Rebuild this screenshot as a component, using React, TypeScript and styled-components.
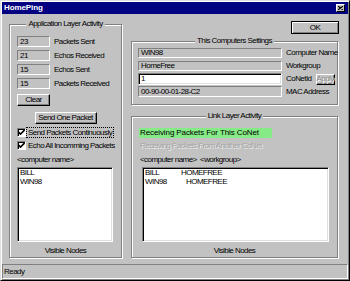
import React from 'react';
import styled, { createGlobalStyle } from 'styled-components';

const FONT = `"Liberation Sans", Arial, sans-serif`;
const FACE = '#c2c2c2';

const Global = createGlobalStyle`
  html, body { margin: 0; padding: 0; background: ${FACE}; }
`;

const Window = styled.div`
  box-sizing: border-box;
  width: 350px;
  height: 281px;
  padding: 1px;
  background: ${FACE};
  border: 1px solid;
  border-color: #dfdfdf #000 #000 #dfdfdf;
  box-shadow: inset 1px 1px 0 #fff, inset -1px -1px 0 #808080;
  display: flex;
  flex-direction: column;
  font-family: ${FONT};
  font-size: 8px;
  line-height: 10px;
  letter-spacing: -0.55px;
  white-space: nowrap;
  color: #000;
`;

const TitleBar = styled.div`
  flex: none;
  height: 12px;
  background: #000080;
  display: flex;
  align-items: center;
  justify-content: space-between;
  padding: 0 3px 0 2px;
`;

const Title = styled.span`
  color: #fff;
  font-weight: bold;
  font-size: 8px;
  letter-spacing: -0.1px;
`;

const CloseBox = styled.span`
  box-sizing: border-box;
  width: 9px;
  height: 8px;
  background: ${FACE};
  border: 1px solid;
  border-color: #fff #000 #000 #fff;
  display: flex;
  align-items: center;
  justify-content: center;
`;

const Body = styled.div`
  flex: 1;
  display: flex;
  gap: 9px;
  padding: 0 10px 5px 7px;
  min-height: 0;
`;

const RightCol = styled.div`
  width: 207px;
  display: flex;
  flex-direction: column;
`;

const GroupBox = styled.div<{ $mt: number; $w?: number; $h?: number }>`
  box-sizing: border-box;
  margin-top: ${(p) => p.$mt}px;
  ${(p) => (p.$w ? `width: ${p.$w}px;` : '')}
  ${(p) => (p.$h ? `height: ${p.$h}px; flex: none;` : 'flex: 1;')}
  border: 1px solid #808080;
  box-shadow: inset 1px 1px 0 #fff, 1px 1px 0 #fff;
  display: flex;
  flex-direction: column;
`;

const Legend = styled.div`
  align-self: center;
  margin-top: -6px;
  height: 10px;
  padding: 0 2px;
  background: ${FACE};
`;

const GroupContent = styled.div<{ $pl: number; $pr: number }>`
  flex: 1;
  display: flex;
  flex-direction: column;
  padding: 0 ${(p) => p.$pr}px 0 ${(p) => p.$pl}px;
`;

const CounterRow = styled.div<{ $mt: number }>`
  display: flex;
  align-items: center;
  gap: 4px;
  height: 11px;
  margin-top: ${(p) => p.$mt}px;
`;

const CounterBox = styled.div`
  box-sizing: border-box;
  width: 33px;
  height: 11px;
  padding-left: 2px;
  line-height: 9px;
  border: 1px solid;
  border-color: #808080 #fff #fff #808080;
`;

const Btn = styled.button<{ $w: number; $h: number; $mt?: number; $center?: boolean; $isDefault?: boolean }>`
  box-sizing: border-box;
  width: ${(p) => p.$w}px;
  height: ${(p) => p.$h}px;
  margin-top: ${(p) => p.$mt ?? 0}px;
  ${(p) => (p.$center ? 'align-self: center;' : '')}
  padding: 0;
  background: ${FACE};
  font: inherit;
  letter-spacing: inherit;
  white-space: nowrap;
  color: #000;
  border: 1px solid;
  border-color: ${(p) => (p.$isDefault ? '#000' : '#fff #000 #000 #fff')};
  box-shadow: ${(p) =>
    p.$isDefault
      ? 'inset 1px 1px 0 #fff, inset -1px -1px 0 #808080'
      : 'inset -1px -1px 0 #808080'};
  display: flex;
  align-items: center;
  justify-content: center;
  &:disabled {
    color: #8a8a8a;
    text-shadow: 1px 1px 0 #fff;
  }
`;

const OkRow = styled.div`
  display: flex;
  justify-content: flex-end;
  margin-top: 7px;
  margin-right: -1px;
`;

const CheckRow = styled.label<{ $mt: number }>`
  display: flex;
  align-items: center;
  gap: 1px;
  height: 10px;
  margin-top: ${(p) => p.$mt}px;
`;

const CheckBox = styled.span`
  box-sizing: border-box;
  flex: none;
  width: 9px;
  height: 9px;
  background: #fff;
  border: 1px solid;
  border-color: #808080 #fff #fff #808080;
  box-shadow: inset 1px 1px 0 #000;
  display: flex;
  align-items: center;
  justify-content: center;
`;

const CheckText = styled.span<{ $focused?: boolean }>`
  padding: 0 1px;
  line-height: 9px;
  outline: ${(p) => (p.$focused ? '1px dotted #000' : 'none')};
`;

const Caption = styled.div<{ $mt: number; $pl?: number; $center?: boolean }>`
  height: 10px;
  margin-top: ${(p) => p.$mt}px;
  padding-left: ${(p) => p.$pl ?? 0}px;
  white-space: pre;
  ${(p) => (p.$center ? 'text-align: center;' : '')}
`;

const ListBox = styled.div<{ $w: number; $ml?: number }>`
  box-sizing: border-box;
  width: ${(p) => p.$w}px;
  height: 75px;
  margin-top: 2px;
  margin-left: ${(p) => p.$ml ?? 0}px;
  padding: 0 0 0 1px;
  background: #fff;
  border: 1px solid;
  border-color: #808080 #fff #fff #808080;
  box-shadow: inset 1px 1px 0 #000, inset -1px -1px 0 #dfdfdf;
  line-height: 9px;
`;

const ListItem = styled.div`
  display: flex;
  height: 9px;
  padding-left: 1px;
`;

const ItemName = styled.span<{ $w?: number }>`
  ${(p) => (p.$w ? `width: ${p.$w}px; flex: none;` : '')}
`;

const SettingRow = styled.div<{ $mt: number; $h: number }>`
  display: flex;
  align-items: center;
  gap: 4px;
  height: ${(p) => p.$h}px;
  margin-top: ${(p) => p.$mt}px;
`;

const ReadField = styled.div<{ $white?: boolean }>`
  box-sizing: border-box;
  flex: none;
  width: 144px;
  height: 100%;
  padding-left: 2px;
  display: flex;
  align-items: center;
  background: ${(p) => (p.$white ? '#fff' : FACE)};
  border: 1px solid;
  border-color: #808080 #fff #fff #808080;
  ${(p) => (p.$white ? 'box-shadow: inset 1px 1px 0 #000, inset -1px -1px 0 #dfdfdf;' : '')}
`;

const FieldLabel = styled.span<{ $grow?: boolean }>`
  ${(p) => (p.$grow ? 'flex: 1;' : '')}
`;

const StatusLight = styled.div`
  align-self: flex-start;
  box-sizing: border-box;
  width: 133px;
  height: 10px;
  margin-top: 7px;
  padding-left: 1px;
  letter-spacing: -0.1px;
  background: #86ea86;
`;

const DisabledText = styled.div<{ $mt: number }>`
  height: 10px;
  margin-top: ${(p) => p.$mt}px;
  padding-left: 1px;
  color: #a4a4a4;
  text-shadow: 1px 1px 0 #ececec;
`;

const StatusBar = styled.div`
  flex: none;
  box-sizing: border-box;
  height: 15px;
  margin-top: 1px;
  padding-left: 1px;
  border: 1px solid;
  border-color: #808080 #fff #fff #808080;
  display: flex;
  align-items: center;
`;

const counters = [
  { value: '23', label: 'Packets Sent' },
  { value: '21', label: 'Echos Received' },
  { value: '15', label: 'Echos Sent' },
  { value: '15', label: 'Packets Received' },
];

const linkNodes = [
  { name: 'BILL', group: 'HOMEFREE', w: 36 },
  { name: 'WIN98', group: 'HOMEFREE', w: 41 },
];

const Check = () => (
  <svg width="7" height="7" viewBox="0 0 7 7">
    <path d="M0.5 3 L2.5 5 L6.5 1" fill="none" stroke="#000" strokeWidth="1.6" />
  </svg>
);

const CloseX = () => (
  <svg width="5" height="4" viewBox="0 0 5 4">
    <path d="M0 0 L5 4 M5 0 L0 4" stroke="#000" strokeWidth="1.1" />
  </svg>
);

export default function App() {
  return (
    <>
      <Global />
      <Window>
        <TitleBar>
          <Title>HomePing</Title>
          <CloseBox>
            <CloseX />
          </CloseBox>
        </TitleBar>
        <Body>
          <GroupBox $mt={10} $w={113}>
            <Legend>Application Layer Activity</Legend>
            <GroupContent $pl={7} $pr={7}>
              {counters.map((c, i) => (
                <CounterRow key={i} $mt={i === 0 ? 7 : 3}>
                  <CounterBox>{c.value}</CounterBox>
                  <span>{c.label}</span>
                </CounterRow>
              ))}
              <Btn $w={33} $h={12} $mt={5}>Clear</Btn>
              <Btn $w={62} $h={12} $mt={6} $center>Send One Packet</Btn>
              <CheckRow $mt={3}>
                <CheckBox><Check /></CheckBox>
                <CheckText $focused>Send Packets Continuously</CheckText>
              </CheckRow>
              <CheckRow $mt={3}>
                <CheckBox><Check /></CheckBox>
                <CheckText>Echo All Incomming Packets</CheckText>
              </CheckRow>
              <Caption $mt={5}>{'<computer name>'}</Caption>
              <ListBox $w={96}>
                <ListItem>BILL</ListItem>
                <ListItem>WIN98</ListItem>
              </ListBox>
              <Caption $mt={4} $center>Visible Nodes</Caption>
            </GroupContent>
          </GroupBox>
          <RightCol>
            <OkRow>
              <Btn $w={48} $h={13} $isDefault>OK</Btn>
            </OkRow>
            <GroupBox $mt={7} $h={64}>
              <Legend>This Computers Settings</Legend>
              <GroupContent $pl={6} $pr={3}>
                <SettingRow $mt={2} $h={10}>
                  <ReadField>WIN98</ReadField>
                  <FieldLabel>Computer Name</FieldLabel>
                </SettingRow>
                <SettingRow $mt={3} $h={10}>
                  <ReadField>HomeFree</ReadField>
                  <FieldLabel>Workgroup</FieldLabel>
                </SettingRow>
                <SettingRow $mt={2} $h={12}>
                  <ReadField $white>1</ReadField>
                  <FieldLabel $grow>CoNetId</FieldLabel>
                  <Btn $w={22} $h={11} disabled>Apply</Btn>
                </SettingRow>
                <SettingRow $mt={1} $h={11}>
                  <ReadField>00-90-00-01-28-C2</ReadField>
                  <FieldLabel>MAC Address</FieldLabel>
                </SettingRow>
              </GroupContent>
            </GroupBox>
            <GroupBox $mt={11}>
              <Legend>Link Layer Activity</Legend>
              <GroupContent $pl={7} $pr={7}>
                <StatusLight>Receiving Packets For This CoNet</StatusLight>
                <DisabledText $mt={3}>Receiving Packets From Another CoNet</DisabledText>
                <Caption $mt={4} $pl={1}>{'<computer name>  <workgroup>'}</Caption>
                <ListBox $w={187} $ml={3}>
                  {linkNodes.map((n) => (
                    <ListItem key={n.name}>
                      <ItemName $w={n.w}>{n.name}</ItemName>
                      <span>{n.group}</span>
                    </ListItem>
                  ))}
                </ListBox>
                <Caption $mt={4} $center>Visible Nodes</Caption>
              </GroupContent>
            </GroupBox>
          </RightCol>
        </Body>
        <StatusBar>Ready</StatusBar>
      </Window>
    </>
  );
}
